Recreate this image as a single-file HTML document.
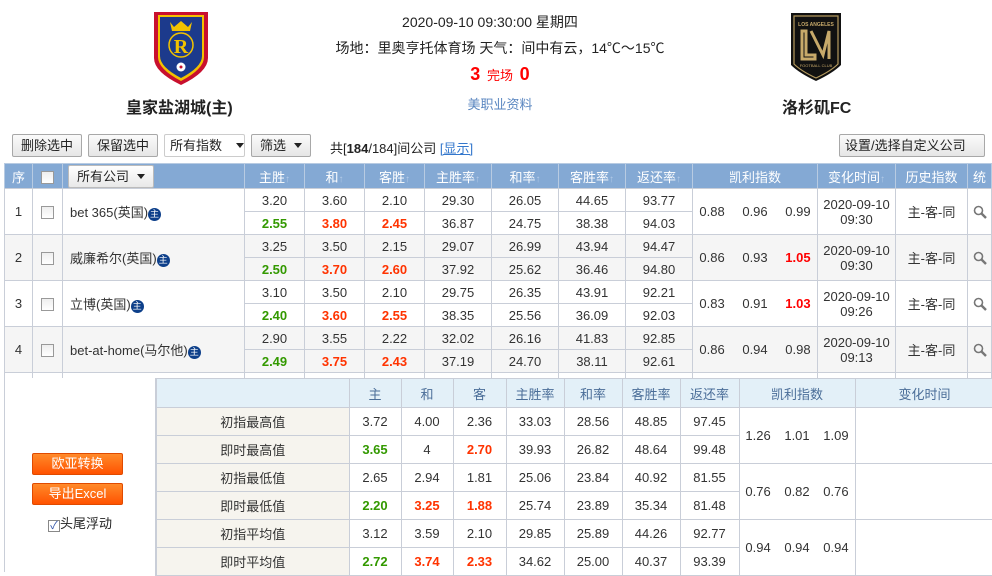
<!DOCTYPE html>
<html><head><meta charset="utf-8">
<style>
*{margin:0;padding:0;box-sizing:border-box}
body{width:992px;height:572px;overflow:hidden;background:#fff;font-family:"Liberation Sans","Noto Sans CJK SC",sans-serif;font-size:12px;color:#333;position:relative}
.abs{position:absolute}
.c{text-align:center}
table{border-collapse:collapse;table-layout:fixed;position:absolute}
td{border:1px solid #c9ced8;text-align:center;font-size:13px;color:#333;white-space:nowrap;overflow:hidden}
.hd td{background:#84a9d4;color:#fff;font-size:13px;border-color:#b8cbe2;height:25px}
.g{color:#339900;font-weight:bold;font-size:13px}
.r{color:#ff3300;font-weight:bold;font-size:13px}
.kr{color:#ff0000;font-weight:bold;font-size:13px}
.alt td{background:#f5f5f5}
.btn{position:absolute;top:134px;height:23px;border:1px solid #a8a8a8;border-radius:2px;background:linear-gradient(#fbfbfb,#e6e6e6);font-size:13px;line-height:21px;text-align:center;color:#222}
.arr{display:inline-block;width:0;height:0;border-left:4px solid transparent;border-right:4px solid transparent;border-top:5px solid #222;margin-left:8px;vertical-align:2px}
.cb{display:inline-block;width:13px;height:13px;border:1px solid #999;background:linear-gradient(#eee,#fff);vertical-align:middle}
.zhu{display:inline-block;width:13px;height:13px;border-radius:50%;background:#0d3f8a;color:#fff;font-size:9px;line-height:13px;text-align:center;vertical-align:0}
.up{color:#b3cbe8;font-size:10px}
.bt td{height:28px}
.bt .lb{background:#f6f4ee;font-size:13px}
.bh td{background:#e3f0f8;color:#4a6d98;height:29px;font-size:13px}
.obtn{position:absolute;left:32px;width:91px;height:22px;background:linear-gradient(#ff8a2a,#ff5200);border:1px solid #e04a00;border-radius:2px;color:#fff;font-size:13px;text-align:center;line-height:20px}
.mg{display:inline-block;vertical-align:middle}
</style></head><body>

<svg class="abs" style="left:152px;top:10px" width="58" height="76" viewBox="0 0 58 76">
<path d="M2 2H56V48Q56 62 29 75Q2 62 2 48Z" fill="#c8102e"/>
<path d="M6 5H52V47Q52 59 29 71Q6 59 6 47Z" fill="#f2c200"/>
<path d="M8 7H50V46Q50 57 29 68Q8 57 8 46Z" fill="#1c3a8c"/>
<path d="M18 12l4 5 7-6 7 6 4-5-2 9H20Z" fill="#f2c200"/>
<circle cx="29" cy="35" r="12" fill="none" stroke="#f2c200" stroke-width="1.5"/>
<text x="29" y="43" font-size="20" font-weight="bold" fill="#f2c200" text-anchor="middle" font-family="Liberation Serif">R</text>
<circle cx="29" cy="57" r="4.5" fill="#fff"/><circle cx="29" cy="57" r="1.5" fill="#c8102e"/>
</svg>
<div class="abs" style="left:126px;top:94px;font-size:16px;font-weight:bold;color:#222">皇家盐湖城(主)</div>

<svg class="abs" style="left:789px;top:11px" width="54" height="72" viewBox="0 0 54 72">
<path d="M2 2H52V54Q44 62 27 70Q10 62 2 54Z" fill="#111"/>
<path d="M5 5H49V53Q42 60 27 67Q12 60 5 53Z" fill="none" stroke="#b59a5e" stroke-width="1.2"/>
<text x="27" y="15" font-size="5" fill="#c7a96a" text-anchor="middle" font-weight="bold">LOS ANGELES</text>
<path d="M13 20V48H26V44H17V20Z M22 20L34 44 40 20V48" fill="none" stroke="#c7a96a" stroke-width="3"/>
<text x="27" y="56" font-size="4" fill="#c7a96a" text-anchor="middle">FOOTBALL CLUB</text>
</svg>
<div class="abs" style="left:782px;top:94px;font-size:16px;font-weight:bold;color:#222">洛杉矶FC</div>

<div class="abs c" style="left:330px;width:320px;top:12px;font-size:14px;color:#222">2020-09-10 09:30:00 星期四</div>
<div class="abs c" style="left:320px;width:360px;top:38px;font-size:14px;color:#222">场地：里奥亨托体育场 天气：间中有云，14℃～15℃</div>
<div class="abs c" style="left:400px;width:200px;top:64px;color:#f00"><span style="font-size:18px;font-weight:bold">3</span>&nbsp;&nbsp;<span style="font-size:13px">完场</span>&nbsp;&nbsp;<span style="font-size:18px;font-weight:bold">0</span></div>
<div class="abs c" style="left:430px;width:140px;top:94px;font-size:13px;color:#5a86c0">美职业资料</div>

<div class="btn" style="left:12px;width:70px">删除选中</div>
<div class="btn" style="left:88px;width:70px">保留选中</div>
<div class="btn" style="left:164px;width:81px;background:#fff;border-color:#ccc;text-align:left;padding-left:5px">所有指数<span class="arr" style="margin-left:14px"></span></div>
<div class="btn" style="left:251px;width:60px">筛选<span class="arr"></span></div>
<div class="abs" style="left:330px;top:138px;font-size:13px;color:#222">共[<b>184</b>/184]间公司 <span style="color:#3377cc;text-decoration:underline">[显示]</span></div>
<div class="btn" style="left:839px;width:146px;text-align:left;padding-left:5px">设置/选择自定义公司<span class="arr" style="margin-left:12px"></span></div>

<table style="left:4px;top:163px;width:988px">
<colgroup><col style="width:28px"><col style="width:30px"><col style="width:182px"><col style="width:60px"><col style="width:60px"><col style="width:60px"><col style="width:67px"><col style="width:67px"><col style="width:67px"><col style="width:67px"><col style="width:125px"><col style="width:78px"><col style="width:72px"><col style="width:24px"></colgroup>
<tr class="hd"><td>序</td><td><span class="cb"></span></td><td style="text-align:left;padding-left:5px"><span style="display:inline-block;background:linear-gradient(#fff,#e8e8e8);color:#222;border:1px solid #bbb;border-radius:2px;padding:1px 8px;font-size:13px;line-height:19px">所有公司<span class="arr"></span></span></td><td>主胜<span class="up">↑</span></td><td>和<span class="up">↑</span></td><td>客胜<span class="up">↑</span></td><td>主胜率<span class="up">↑</span></td><td>和率<span class="up">↑</span></td><td>客胜率<span class="up">↑</span></td><td>返还率<span class="up">↑</span></td><td>凯利指数</td><td>变化时间<span class="up">↑</span></td><td>历史指数</td><td>统</td></tr>
</table>

<table style="left:4px;top:188px;width:988px">
<colgroup><col style="width:28px"><col style="width:30px"><col style="width:182px"><col style="width:60px"><col style="width:60px"><col style="width:60px"><col style="width:67px"><col style="width:67px"><col style="width:67px"><col style="width:67px"><col style="width:125px"><col style="width:78px"><col style="width:72px"><col style="width:24px"></colgroup>
<tr style="height:23px"><td rowspan="2">1</td><td rowspan="2"><span class="cb"></span></td><td rowspan="2" style="text-align:left;padding-left:7px;font-size:13px">bet 365(英国)<span class="zhu">主</span></td><td>3.20</td><td>3.60</td><td>2.10</td><td>29.30</td><td>26.05</td><td>44.65</td><td>93.77</td><td rowspan="2" style="word-spacing:14px">0.88 0.96 0.99</td><td rowspan="2">2020-09-10<br>09:30</td><td rowspan="2" style="font-size:13px">主-客-同</td><td rowspan="2"><svg class="mg" width="14" height="14" viewBox="0 0 14 14"><circle cx="5.5" cy="5.5" r="4" fill="none" stroke="#777" stroke-width="1.6"/><path d="M8.5 8.5L13 13" stroke="#777" stroke-width="2.4"/></svg></td></tr>
<tr style="height:23px"><td class="g">2.55</td><td class="r">3.80</td><td class="r">2.45</td><td>36.87</td><td>24.75</td><td>38.38</td><td>94.03</td></tr>
<tr class="alt" style="height:23px"><td rowspan="2">2</td><td rowspan="2"><span class="cb"></span></td><td rowspan="2" style="text-align:left;padding-left:7px;font-size:13px">威廉希尔(英国)<span class="zhu">主</span></td><td>3.25</td><td>3.50</td><td>2.15</td><td>29.07</td><td>26.99</td><td>43.94</td><td>94.47</td><td rowspan="2" style="word-spacing:14px">0.86 0.93 <span class="kr">1.05</span></td><td rowspan="2">2020-09-10<br>09:30</td><td rowspan="2" style="font-size:13px">主-客-同</td><td rowspan="2"><svg class="mg" width="14" height="14" viewBox="0 0 14 14"><circle cx="5.5" cy="5.5" r="4" fill="none" stroke="#777" stroke-width="1.6"/><path d="M8.5 8.5L13 13" stroke="#777" stroke-width="2.4"/></svg></td></tr>
<tr class="alt" style="height:23px"><td class="g">2.50</td><td class="r">3.70</td><td class="r">2.60</td><td>37.92</td><td>25.62</td><td>36.46</td><td>94.80</td></tr>
<tr style="height:23px"><td rowspan="2">3</td><td rowspan="2"><span class="cb"></span></td><td rowspan="2" style="text-align:left;padding-left:7px;font-size:13px">立博(英国)<span class="zhu">主</span></td><td>3.10</td><td>3.50</td><td>2.10</td><td>29.75</td><td>26.35</td><td>43.91</td><td>92.21</td><td rowspan="2" style="word-spacing:14px">0.83 0.91 <span class="kr">1.03</span></td><td rowspan="2">2020-09-10<br>09:26</td><td rowspan="2" style="font-size:13px">主-客-同</td><td rowspan="2"><svg class="mg" width="14" height="14" viewBox="0 0 14 14"><circle cx="5.5" cy="5.5" r="4" fill="none" stroke="#777" stroke-width="1.6"/><path d="M8.5 8.5L13 13" stroke="#777" stroke-width="2.4"/></svg></td></tr>
<tr style="height:23px"><td class="g">2.40</td><td class="r">3.60</td><td class="r">2.55</td><td>38.35</td><td>25.56</td><td>36.09</td><td>92.03</td></tr>
<tr class="alt" style="height:23px"><td rowspan="2">4</td><td rowspan="2"><span class="cb"></span></td><td rowspan="2" style="text-align:left;padding-left:7px;font-size:13px">bet-at-home(马尔他)<span class="zhu">主</span></td><td>2.90</td><td>3.55</td><td>2.22</td><td>32.02</td><td>26.16</td><td>41.83</td><td>92.85</td><td rowspan="2" style="word-spacing:14px">0.86 0.94 0.98</td><td rowspan="2">2020-09-10<br>09:13</td><td rowspan="2" style="font-size:13px">主-客-同</td><td rowspan="2"><svg class="mg" width="14" height="14" viewBox="0 0 14 14"><circle cx="5.5" cy="5.5" r="4" fill="none" stroke="#777" stroke-width="1.6"/><path d="M8.5 8.5L13 13" stroke="#777" stroke-width="2.4"/></svg></td></tr>
<tr class="alt" style="height:23px"><td class="g">2.49</td><td class="r">3.75</td><td class="r">2.43</td><td>37.19</td><td>24.70</td><td>38.11</td><td>92.61</td></tr>
<tr style="height:8px"><td></td><td></td><td></td><td></td><td></td><td></td><td></td><td></td><td></td><td></td><td></td><td></td><td></td><td></td></tr>
</table>

<div class="abs" style="left:4px;top:378px;width:152px;height:194px;border-left:1px solid #c9ced8;background:#fff"></div>
<div class="obtn" style="top:453px">欧亚转换</div>
<div class="obtn" style="top:483px">导出Excel</div>
<div class="abs" style="left:48px;top:513px;font-size:13px;color:#222"><span style="display:inline-block;width:12px;height:12px;border:1px solid #888;background:#fff;color:#3355aa;font-size:11px;line-height:10px;text-align:center;vertical-align:-1px">✓</span>头尾浮动</div>

<table class="bt" style="left:155px;top:378px;width:838px;border-left:2px solid #c9ced8">
<colgroup><col style="width:193px"><col style="width:52px"><col style="width:52px"><col style="width:53px"><col style="width:58px"><col style="width:58px"><col style="width:58px"><col style="width:59px"><col style="width:116px"><col style="width:139px"></colgroup>
<tr class="bh"><td></td><td>主</td><td>和</td><td>客</td><td>主胜率</td><td>和率</td><td>客胜率</td><td>返还率</td><td>凯利指数</td><td>变化时间</td></tr>
<tr><td class="lb">初指最高值</td><td>3.72</td><td>4.00</td><td>2.36</td><td>33.03</td><td>28.56</td><td>48.85</td><td>97.45</td><td rowspan="2" style="word-spacing:10px">1.26 1.01 1.09</td><td rowspan="2"></td></tr>
<tr><td class="lb">即时最高值</td><td class="g">3.65</td><td>4</td><td class="r">2.70</td><td>39.93</td><td>26.82</td><td>48.64</td><td>99.48</td></tr>
<tr><td class="lb">初指最低值</td><td>2.65</td><td>2.94</td><td>1.81</td><td>25.06</td><td>23.84</td><td>40.92</td><td>81.55</td><td rowspan="2" style="word-spacing:10px">0.76 0.82 0.76</td><td rowspan="2"></td></tr>
<tr><td class="lb">即时最低值</td><td class="g">2.20</td><td class="r">3.25</td><td class="r">1.88</td><td>25.74</td><td>23.89</td><td>35.34</td><td>81.48</td></tr>
<tr><td class="lb">初指平均值</td><td>3.12</td><td>3.59</td><td>2.10</td><td>29.85</td><td>25.89</td><td>44.26</td><td>92.77</td><td rowspan="2" style="word-spacing:10px">0.94 0.94 0.94</td><td rowspan="2"></td></tr>
<tr><td class="lb">即时平均值</td><td class="g">2.72</td><td class="r">3.74</td><td class="r">2.33</td><td>34.62</td><td>25.00</td><td>40.37</td><td>93.39</td></tr>
</table>
</body></html>
